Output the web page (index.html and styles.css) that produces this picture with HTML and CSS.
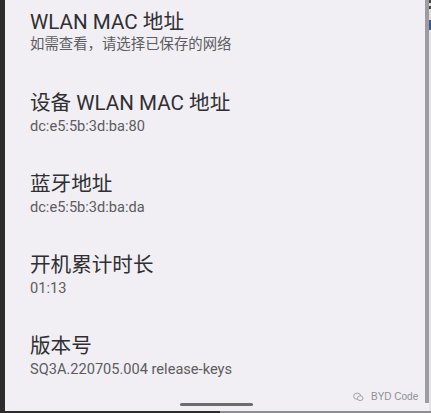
FILE: index.html
```html
<!DOCTYPE html>
<html lang="zh-CN">
<head>
<meta charset="utf-8">
<link rel="stylesheet" href="styles.css">
</head>
<body>
<div class="frame">
  <div class="edge-left"></div>
  <main class="panel">
    <ul class="list">
      <li class="item">
        <div class="title">WLAN MAC 地址</div>
        <div class="summary cjk">如需查看，请选择已保存的网络</div>
      </li>
      <li class="item">
        <div class="title">设备 WLAN MAC 地址</div>
        <div class="summary">dc:e5:5b:3d:ba:80</div>
      </li>
      <li class="item">
        <div class="title">蓝牙地址</div>
        <div class="summary">dc:e5:5b:3d:ba:da</div>
      </li>
      <li class="item">
        <div class="title">开机累计时长</div>
        <div class="summary">01:13</div>
      </li>
      <li class="item">
        <div class="title">版本号</div>
        <div class="summary">SQ3A.220705.004 release-keys</div>
      </li>
    </ul>
    <div class="home-bar"></div>
    <div class="watermark">
      <svg class="wm-icon" width="11" height="10" viewBox="0 0 11 10">
        <ellipse cx="4.2" cy="4.2" rx="3.6" ry="3.1" fill="none" stroke="#9a9a9a" stroke-width="0.9"/>
        <ellipse cx="7.2" cy="6.2" rx="2.8" ry="2.4" fill="#f1eff3" stroke="#9a9a9a" stroke-width="0.9"/>
      </svg>
      <span>BYD Code</span>
    </div>
  </main>
  <div class="edge-right">
    <div class="scroll"></div>
    <div class="side"></div>
  </div>
</div>
<div class="bottom-line">
  <div class="bl-dark"></div>
  <div class="bl-light"></div>
</div>
</body>
</html>
```

FILE: styles.css
```css
html, body {
  margin: 0;
  padding: 0;
  width: 431px;
  height: 413px;
  overflow: hidden;
  background: #f1eff3;
  font-family: Roboto, "Noto Sans CJK SC", sans-serif;
}

.frame {
  display: flex;
  height: 411px;
}

.edge-left {
  width: 5px;
  background: #2c2c2c;
  flex: none;
}

.panel {
  position: relative;
  flex: 1;
  background: #f1eff3;
  overflow: hidden;
}

.edge-right {
  display: flex;
  width: 6px;
  flex: none;
}

.scroll {
  width: 4px;
  height: 403px;
  background: #9d9ca3;
}

.side {
  width: 2px;
  background: linear-gradient(#444 0 3px, #ddd 3px 6px, #444 6px 9px, #ddd 9px 20px, #3d5a8a 20px 30px, #e4e4e6 30px);
}

.list {
  list-style: none;
  margin: -9px 0 0 0;
  padding: 0 0 0 25px;
}

.item {
  padding: 17.6px 0 17.6px;
  display: flex;
  flex-direction: column;
}

.title {
  font-size: 20.6px;
  line-height: 26px;
  color: #2f2f33;
}

.summary {
  font-size: 14.6px;
  line-height: 20px;
  color: #5c5c61;
}

.summary.cjk {
  font-size: 14.4px;
}

.home-bar {
  position: absolute;
  left: 175px;
  top: 403px;
  width: 73px;
  height: 3px;
  border-radius: 2px;
  background: #6c6c6c;
}

.watermark {
  position: absolute;
  left: 348px;
  top: 391px;
  display: flex;
  align-items: center;
  gap: 7px;
  font-family: "Liberation Sans", sans-serif;
  font-size: 10px;
  color: #8e8e93;
}

.bottom-line {
  display: flex;
  height: 2px;
}

.bl-dark {
  width: 220px;
  background: #2c2c2c;
}

.bl-light {
  flex: 1;
  background: #8f8f93;
}
```
